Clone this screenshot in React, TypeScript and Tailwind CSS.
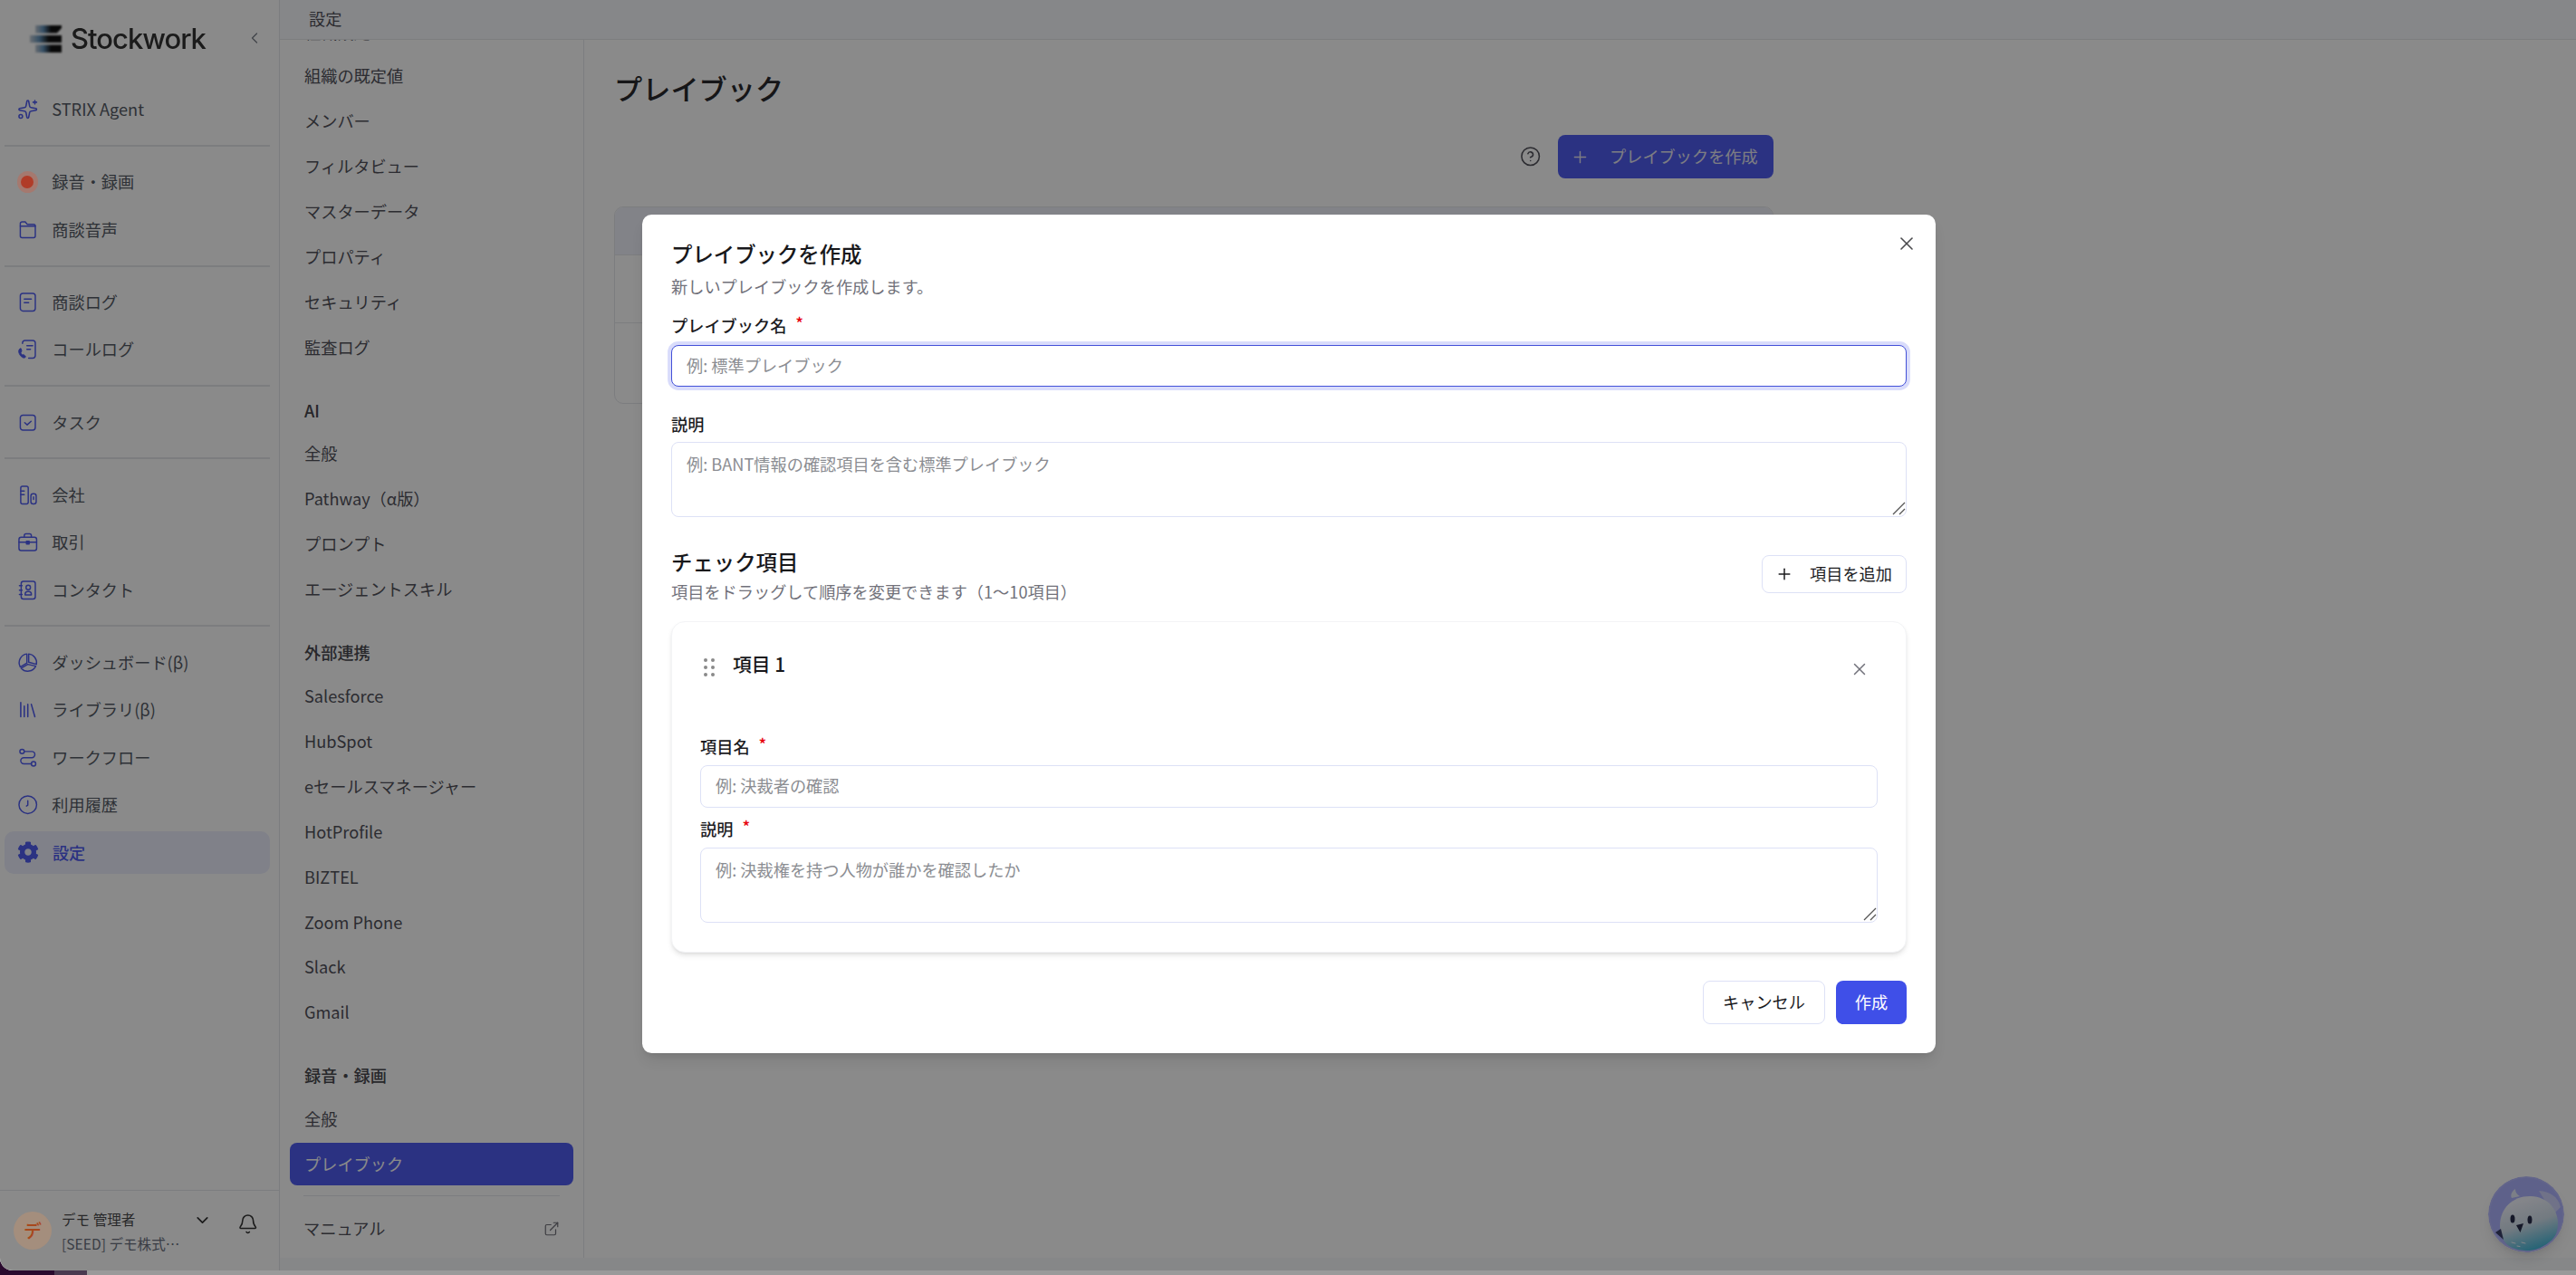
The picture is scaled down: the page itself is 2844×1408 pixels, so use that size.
import type { ReactNode } from "react";
import { Bell, ChevronDown, ChevronLeft, CircleHelp, ExternalLink, Library, Plus, Sparkles, X } from "lucide-react";
import { FaCog } from "react-icons/fa";

function Glyph({ children }: { children: ReactNode }) {
  return (
    <svg
      viewBox="0 0 24 24"
      fill="none"
      stroke="currentColor"
      strokeWidth="1.5"
      strokeLinecap="round"
      strokeLinejoin="round"
      className="size-[23.4px] shrink-0"
    >
      {children}
    </svg>
  );
}

const iconLucide = "size-[23.4px] shrink-0";

const icons: Record<string, ReactNode> = {
  strix: <Sparkles className={iconLucide} strokeWidth={1.6} />,
  rec: (
    <span className="relative z-[60] flex size-[23.4px] shrink-0 items-center justify-center rounded-full bg-[#a5796f]">
      <span className="size-[14px] rounded-full bg-[#b03c28]" />
    </span>
  ),
  folder: (
    <Glyph>
      <path d="M3.5 8V5a2 2 0 0 1 2-2h3.6l2.4 3h7a2 2 0 0 1 2 2v11a2 2 0 0 1-2 2h-13a2 2 0 0 1-2-2z" />
      <path d="M3.5 8h17" />
    </Glyph>
  ),
  log: (
    <Glyph>
      <rect x="3.5" y="2" width="17" height="20" rx="3" />
      <path d="M8 8.5h8M8 12.5h5" />
    </Glyph>
  ),
  call: (
    <Glyph>
      <path d="M6 5.500V5a3 3 0 0 1 3-3h8.500a3 3 0 0 1 3 3v14a3 3 0 0 1-3 3H13" />
      <path d="M11 8h6.500M11 12h4" />
      <path
        d="M3 11.500c-1.500 1-1.800 3-.8 5.300 1 2.300 3 4.800 5.300 5 1.200.1 2-.7 2.100-1.700l-2.500-2.200-1.400.6c-.9-.8-1.500-2-1.700-3.100l1.200-1-.7-3.100c-.5-.3-1-.2-1.500.2z"
        fill="currentColor"
        strokeWidth="0.8"
      />
    </Glyph>
  ),
  task: (
    <Glyph>
      <rect x="3.500" y="3.500" width="17" height="17" rx="3" />
      <path d="m8.500 12 2.800 2.500 4.400-4" />
    </Glyph>
  ),
  company: (
    <Glyph>
      <rect x="4" y="2" width="8.500" height="20" rx="2" />
      <rect x="15.500" y="10.500" width="6" height="11.500" rx="2.500" />
      <path d="M4 7.500h4M4 11.500h4M18.500 14v3" />
    </Glyph>
  ),
  deal: (
    <Glyph>
      <rect x="2" y="6.500" width="20" height="15" rx="2.500" />
      <path d="M8 6.500V4.500a2 2 0 0 1 2-2h4a2 2 0 0 1 2 2v2M2 12h20" />
      <rect x="10.500" y="11" width="3" height="3" fill="currentColor" />
    </Glyph>
  ),
  contact: (
    <Glyph>
      <rect x="4.500" y="2" width="16" height="20" rx="2.500" />
      <path d="M2.500 7h3M2.500 12h3M2.500 17h3" />
      <circle cx="12.500" cy="9" r="2.500" />
      <path d="M9 17.500v-1a3 3 0 0 1 3-3h1a3 3 0 0 1 3 3v1z" />
    </Glyph>
  ),
  dash: (
    <Glyph>
      <path d="M11 2.200A10 10 0 0 0 3.500 17L11 12.500z" />
      <path d="M13 2.200a10 10 0 0 1 8.800 11.800L13 11.500z" />
      <path d="M21 16a10 10 0 0 1-16.500 2.400l7.500-4.400z" />
    </Glyph>
  ),
  library: <Library className={iconLucide} strokeWidth={1.6} />,
  flow: (
    <Glyph>
      <circle cx="5.500" cy="5" r="2.500" />
      <circle cx="18.500" cy="19" r="2.500" />
      <path d="M8 5h8.500a3.500 3.500 0 0 1 0 7h-9a3.500 3.500 0 0 0 0 7H16" />
    </Glyph>
  ),
  history: (
    <Glyph>
      <circle cx="12" cy="12" r="10" />
      <path d="M12 7.500v5l-1.500 1" />
    </Glyph>
  ),
  settings: <FaCog className="size-[24px] shrink-0" />,
};

const navGroups = [
  [{ icon: "strix", label: "STRIX Agent" }],
  [
    { icon: "rec", label: "録音・録画" },
    { icon: "folder", label: "商談音声" },
  ],
  [
    { icon: "log", label: "商談ログ" },
    { icon: "call", label: "コールログ" },
  ],
  [{ icon: "task", label: "タスク" }],
  [
    { icon: "company", label: "会社" },
    { icon: "deal", label: "取引" },
    { icon: "contact", label: "コンタクト" },
  ],
  [
    { icon: "dash", label: "ダッシュボード(β)" },
    { icon: "library", label: "ライブラリ(β)" },
    { icon: "flow", label: "ワークフロー" },
    { icon: "history", label: "利用履歴" },
    { icon: "settings", label: "設定", active: true },
  ],
];

const settingsGroups = [
  {
    items: ["組織設定", "組織の既定値", "メンバー", "フィルタビュー", "マスターデータ", "プロパティ", "セキュリティ", "監査ログ"],
  },
  { title: "AI", items: ["全般", "Pathway（α版）", "プロンプト", "エージェントスキル"] },
  {
    title: "外部連携",
    items: ["Salesforce", "HubSpot", "eセールスマネージャー", "HotProfile", "BIZTEL", "Zoom Phone", "Slack", "Gmail"],
  },
  { title: "録音・録画", items: ["全般", "プレイブック"] },
];

function Logo() {
  return (
    <div className="flex h-[97.6px] items-start pl-[33px] pt-[27px]">
      <svg viewBox="0 0 35 30" className="mt-[1px] h-[30px] w-[35px] blur-[0.8px]">
        <defs>
          <linearGradient id="logoFade" x1="0" x2="1" y1="0" y2="0">
            <stop offset="0" stopColor="#c4ccd4" />
            <stop offset="0.3" stopColor="#5f8fb8" />
            <stop offset="0.6" stopColor="#111" />
            <stop offset="1" stopColor="#111" />
          </linearGradient>
        </defs>
        <path d="M6 0h29v3L30 8.500H6z" fill="url(#logoFade)" />
        <path d="M0 11h35v8H0z" fill="url(#logoFade)" />
        <path d="M6 21.500h29V30H6z" fill="url(#logoFade)" />
      </svg>
      <span className="ml-[10px] font-['Inter',sans-serif] text-[31px] leading-[32px] font-medium tracking-[-1px] text-[#333] blur-[0.35px]">
        Stockwork
      </span>
      <ChevronLeft className="ml-auto mr-[17px] mt-[5px] size-[20px] text-[#7b808a]" strokeWidth={1.6} />
    </div>
  );
}

function Sidebar() {
  return (
    <aside className="flex h-full w-[309px] shrink-0 flex-col border-r border-[#e5e7eb] bg-white">
      <Logo />
      <nav className="flex-1 pl-[5px] pr-[10px]">
        {navGroups.map((group, i) => (
          <div key={i}>
            {i > 0 && <div className="mb-[15.7px] mt-[15.6px] h-[2px] bg-[#e5e7eb]" />}
            <div className="flex flex-col gap-[5.7px]">
              {group.map((item) => (
                <a
                  key={item.label}
                  className={
                    "flex h-[46.8px] items-center gap-[15.3px] rounded-[10px] pl-[13.600px] text-[18.2px] " +
                    ("active" in item ? "bg-[#edeffe] font-medium text-[#505df1]" : "text-[#565c66]")
                  }
                >
                  <span className="flex text-[#505df1]">{icons[item.icon]}</span>
                  {item.label}
                </a>
              ))}
            </div>
          </div>
        ))}
      </nav>
      <div className="flex h-[89px] items-start border-t-[1.3px] border-[#e5e7eb] pl-[15px] pt-[23px]">
        <div className="relative z-[60] flex size-[42px] shrink-0 items-center justify-center rounded-full bg-[#a48e7d] text-[20px] font-medium text-[#a8481c]">
          デ
        </div>
        <div className="ml-[11px] w-[140px]">
          <div className="mt-[-5px] text-[15.6px] leading-[26px] text-[#4a4a4d]">デモ 管理者</div>
          <div className="mt-[1px] text-[15.6px] leading-[26px] text-[#6b7280]">[SEED] デモ株式…</div>
        </div>
        <ChevronDown className="ml-[5px] mt-[-1px] size-[21px] shrink-0 text-[#333]" strokeWidth={2} />
        <Bell className="ml-[28px] mt-[2px] size-[23.4px] shrink-0 text-[#333]" strokeWidth={1.6} />
      </div>
    </aside>
  );
}

function SettingsColumn() {
  return (
    <div className="flex h-full w-[336px] shrink-0 flex-col border-r border-[#e5e7eb] bg-white">
      <div className="flex-1 overflow-hidden px-[11px]">
        <div className="mt-[-33.4px] flex flex-col gap-[24.2px]">
          {settingsGroups.map((group, i) => (
            <div key={i}>
              {group.title && (
                <div className="flex h-[46.8px] items-center px-[16px] pb-[2px] text-[18.2px] font-medium text-[#48484e]">
                  {group.title}
                </div>
              )}
              <div className="flex flex-col gap-[3.12px]">
                {group.items.map((item, j) => (
                  <a
                    key={item}
                    className={
                      "flex h-[46.8px] items-center rounded-[8px] px-[16px] text-[18.2px] " +
                      (i === 0 && j === 0 ? "pt-[4px] " : "") +
                      (item === "プレイブック" ? "bg-[#505df1] text-white" : "text-[#52525b]")
                    }
                  >
                    {item}
                  </a>
                ))}
              </div>
            </div>
          ))}
        </div>
      </div>
      <div className="h-[69px] shrink-0 px-[26px]">
        <div className="h-[1.3px] bg-[#e5e7eb]" />
        <div className="mt-[12px] flex h-[46.8px] items-center justify-between text-[18.2px] text-[#52525b]">
          マニュアル
          <ExternalLink className="size-[18px] text-[#71717a]" strokeWidth={1.6} />
        </div>
      </div>
    </div>
  );
}

function MainContent() {
  return (
    <main className="flex-1 bg-white pl-[33px] pt-[34px]">
      <div className="w-[1280px]">
        <h1 className="text-[31.2px] leading-[38px] font-medium text-[#2a2a2e]">プレイブック</h1>
        <div className="mt-[33px] flex items-center justify-end gap-[19px]">
          <CircleHelp className="size-[23.4px] text-[#52525b]" strokeWidth={1.6} />
          <button className="flex h-[48px] w-[238px] items-center rounded-[8px] bg-[#505df1] pl-[14px] text-[18.2px] text-[#e8e8f2]">
            <Plus className="size-[21px]" strokeWidth={1.6} />
            <span className="ml-[22px]">プレイブックを作成</span>
          </button>
        </div>
        <div className="mt-[31px] h-[218px] overflow-hidden rounded-[10px] border-[1.3px] border-[#e5e7eb]">
          <div className="h-[53px] border-b-[1.3px] border-[#e5e7eb] bg-[#f1f3fb]" />
          <div className="h-[75px] border-b-[1.3px] border-[#e5e7eb]" />
        </div>
      </div>
    </main>
  );
}

function Field({ label, required, mt, children }: { label: string; required?: boolean; mt: string; children: ReactNode }) {
  return (
    <div className={mt}>
      <label className="flex h-[26px] items-center text-[18.2px] leading-[26px] font-medium text-[#1c1c1f]">
        {label}
        {required && <span className="ml-[10px] mt-[-6px] text-[18px] leading-none text-[#e7000b]">*</span>}
      </label>
      {children}
    </div>
  );
}

const inputClass =
  "block w-full rounded-[8px] border-[1.3px] bg-white px-[16px] text-[18.2px] text-[#1c1c1f] outline-none placeholder:text-[#8b8d92]";

function NoteArea({ placeholder, className }: { placeholder: string; className: string }) {
  return (
    <div className={"relative " + className}>
      <textarea
        placeholder={placeholder}
        className={inputClass + " h-full resize-none border-[#dde1f6] pb-[10px] pt-[10px] leading-[26px]"}
      />
      <svg viewBox="0 0 16 16" className="pointer-events-none absolute bottom-[2px] right-[1px] size-[16px] stroke-[#555]" strokeWidth="1.3">
        <path d="M2 15 15 2M9 15l6-6" />
      </svg>
    </div>
  );
}

function Modal() {
  return (
    <div className="absolute inset-0 z-50 flex justify-center bg-black/46 pl-[2px]">
      <div className="relative mt-[237px] h-[926px] w-[1428px] rounded-[10.4px] bg-white pl-[32px] pr-[32px] pt-[27px] shadow-lg">
        <button className="absolute right-[20px] top-[20px] text-[#4a4a4d]">
          <X className="size-[24px]" strokeWidth={1.6} />
        </button>

        <h2 className="text-[23.4px] leading-[32px] font-medium text-[#18181b]">プレイブックを作成</h2>
        <p className="mt-[7px] text-[18.2px] leading-[26px] text-[#71717a]">新しいプレイブックを作成します。</p>

        <Field label="プレイブック名" required mt="mt-[17px]">
          <input
            placeholder="例: 標準プレイブック"
            className={inputClass + " mt-[9px] h-[46px] border-[#4351d8] pb-[3px] ring-[3.9px] ring-[#d9dcfb]"}
          />
        </Field>

        <Field label="説明" mt="mt-[28px]">
          <NoteArea placeholder="例: BANT情報の確認項目を含む標準プレイブック" className="mt-[6.5px] h-[83px]" />
        </Field>

        <div className="mt-[33px] flex items-start justify-between">
          <div>
            <h3 className="text-[23.4px] leading-[32px] font-medium text-[#18181b]">チェック項目</h3>
            <p className="mt-[4px] text-[18.2px] leading-[26px] text-[#71717a]">項目をドラッグして順序を変更できます（1〜10項目）</p>
          </div>
          <button className="mt-[9.500px] flex h-[42px] w-[160px] items-center rounded-[8px] border-[1.3px] border-[#dde1f6] pl-[14px] text-[18.2px] text-[#1c1c1f]">
            <Plus className="size-[20px]" strokeWidth={1.8} />
            <span className="ml-[18px]">項目を追加</span>
          </button>
        </div>

        <div className="mt-[20.5px] h-[366px] rounded-[15px] border border-[#f3f4f6] bg-white px-[31px] pt-[31px] shadow-md">
          <div className="flex h-[93px] items-start justify-between">
            <div className="flex items-start">
              <svg viewBox="0 0 12 22" className="ml-[4px] mt-[8px] h-[22px] w-[12px] fill-[#8a8a8a]">
                <circle cx="2" cy="3" r="2" />
                <circle cx="10" cy="3" r="2" />
                <circle cx="2" cy="11" r="2" />
                <circle cx="10" cy="11" r="2" />
                <circle cx="2" cy="19" r="2" />
                <circle cx="10" cy="19" r="2" />
              </svg>
              <span className="ml-[20px] text-[20.8px] leading-[30px] font-medium text-[#18181b]">項目 1</span>
            </div>
            <X className="mr-[9px] mt-[10px] size-[22px] text-[#71717a]" strokeWidth={1.6} />
          </div>
          <Field label="項目名" required mt="">
            <input placeholder="例: 決裁者の確認" className={inputClass + " mt-[7.500px] h-[47px] border-[#dde1f6] pb-[2px]"} />
          </Field>
          <Field label="説明" required mt="mt-[10.500px]">
            <NoteArea placeholder="例: 決裁権を持つ人物が誰かを確認したか" className="mt-[8px] h-[83.400px]" />
          </Field>
        </div>

        <div className="mt-[31px] flex justify-end gap-[12px]">
          <button className="h-[48px] w-[135px] rounded-[8px] border-[1.3px] border-[#dde1f6] text-[18.2px] text-[#1c1c1f]">キャンセル</button>
          <button className="h-[48px] w-[78px] rounded-[8px] bg-[#3f4fe8] text-[18.2px] text-white">作成</button>
        </div>
      </div>
    </div>
  );
}

function Mascot() {
  return (
    <svg viewBox="0 0 84 84" className="absolute bottom-[20px] right-[13px] z-10 size-[84px] rounded-full shadow-lg">
      <defs>
        <linearGradient id="birdBody" x1="0.3" x2="0.6" y1="0.1" y2="1">
          <stop offset="0" stopColor="#f4f6ff" />
          <stop offset="0.45" stopColor="#d4e2ee" />
          <stop offset="1" stopColor="#38b4d8" />
        </linearGradient>
        <clipPath id="birdClip">
          <circle cx="42" cy="42" r="40" />
        </clipPath>
      </defs>
      <circle cx="42" cy="42" r="42" fill="#b7bbff" />
      <circle cx="42" cy="42" r="40" fill="#aeb3ff" />
      <g clipPath="url(#birdClip)">
        <path d="M26 24c-2-4 1-8 4-10 0 4 2 6 5 8z" fill="#e6ebfa" />
        <path d="M56 16c12 1 21 6 24 18l-8 8z" fill="#cfd3fb" />
        <path d="M13 55c0-20 14-33 33-33 19 0 31 14 31 30 0 18-14 32-33 32-19 0-31-12-31-29z" fill="url(#birdBody)" />
        <path d="M8 62l6-4 3 12z" fill="#3a4068" />
      </g>
      <ellipse cx="27" cy="47" rx="2.500" ry="4.500" fill="#272d4a" />
      <ellipse cx="46" cy="48" rx="2.500" ry="4.500" fill="#272d4a" />
      <path d="M31 54l8-2-3.500 10z" fill="#272d4a" />
      <path d="M26 73l4 1M32 77l3 .5M37 73l4 1" stroke="#f2f6ff" strokeWidth="1" strokeLinecap="round" />
    </svg>
  );
}

export default function App() {
  return (
    <div className="flex h-[1408px] w-[2844px] flex-col overflow-hidden bg-[#2a0a2e] font-['Noto_Sans_CJK_JP',sans-serif]">
      <div className="relative flex h-[1403px] shrink-0 overflow-hidden rounded-bl-[14px] bg-white">
        <Sidebar />
        <div className="flex min-w-0 flex-1 flex-col bg-[#f8fafc]">
          <header className="relative z-10 flex h-[44px] shrink-0 items-center border-b-[1.3px] border-[#e5e7eb] bg-[#f8f9fd] pb-[2px] pl-[32px] text-[18.2px] text-[#52525b]">
            設定
          </header>
          <div className="flex h-[1345px] shrink-0">
            <SettingsColumn />
            <MainContent />
          </div>
        </div>
        <Mascot />
        <Modal />
      </div>
      <div className="flex h-[5px] shrink-0">
        <div className="w-[60px] bg-[#2a0a2e]" />
        <div className="w-[36px] bg-[#4a3a50]" />
        <div className="flex-1 bg-[#9a9a9a]" />
      </div>
    </div>
  );
}
